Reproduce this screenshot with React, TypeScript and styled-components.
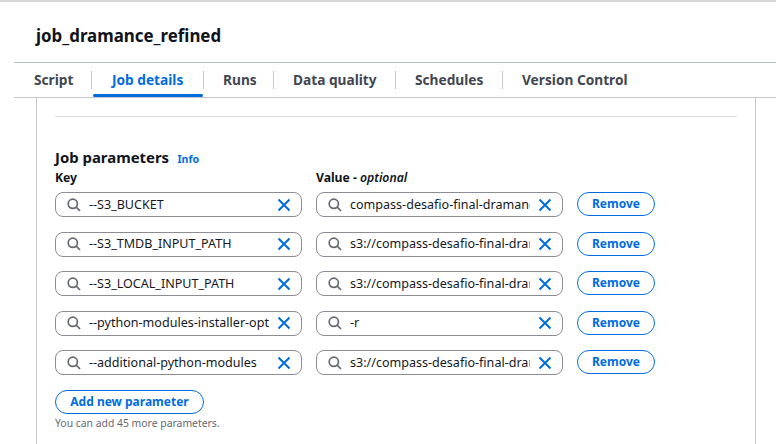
import React from 'react'
import styled, { createGlobalStyle } from 'styled-components'

const FONT = '"Noto Sans", "Open Sans", sans-serif'

const GlobalStyle = createGlobalStyle`
  html, body {
    margin: 0;
    padding: 0;
    width: 776px;
    height: 444px;
    overflow: hidden;
    background: #fff;
    font-family: ${FONT};
    color: #16191f;
  }
`

const Page = styled.div`
  display: flex;
  flex-direction: column;
  width: 776px;
  height: 444px;
  overflow: hidden;
  border-top: 2px solid #d5d7d9;
  box-sizing: border-box;
`

const Title = styled.h1`
  margin: 0;
  padding: 23px 0 0 36px;
  height: 60px;
  box-sizing: border-box;
  font-size: 16.9px;
  line-height: 22px;
  font-weight: 700;
  color: #0f141a;
`

const TabBar = styled.div`
  display: flex;
  align-items: center;
  margin-left: 14px;
  height: 34px;
  box-sizing: content-box;
  border-top: 1px solid #b4bcc4;
  border-bottom: 1px solid #c6c6cd;
`

const Tab = styled.div<{ $active?: boolean; $width: number; $first?: boolean }>`
  position: relative;
  flex: none;
  width: ${(p) => p.$width}px;
  height: 18px;
  box-sizing: border-box;
  padding-left: ${(p) => (p.$active || p.$first ? 20 : 19)}px;
  font-size: 13.7px;
  line-height: 18px;
  font-weight: 700;
  white-space: nowrap;
  color: ${(p) => (p.$active ? '#006ce0' : '#424650')};
  border-left: ${(p) => (p.$first ? 'none' : '1px solid #c6c6cd')};

  ${(p) =>
    p.$active &&
    `
    &::after {
      content: '';
      position: absolute;
      left: 1px;
      right: 0;
      bottom: -8px;
      height: 3px;
      border-radius: 2px;
      background: #006ce0;
    }
  `}
`

const Panel = styled.div`
  flex: 1;
  margin: 0 20px 0 36px;
  padding: 18px 18px 0 18px;
  border-left: 1px solid #c6c6cd;
  border-right: 1px solid #c6c6cd;
`

const Divider = styled.hr`
  margin: 0;
  border: none;
  border-top: 1px solid #dcdee0;
`

const SectionHeader = styled.div`
  display: flex;
  align-items: baseline;
  gap: 8.5px;
  margin-top: 30px;
  height: 20px;
`

const SectionTitle = styled.h2`
  margin: 0;
  font-size: 14.9px;
  line-height: 20px;
  font-weight: 700;
  color: #0f141a;
`

const InfoLink = styled.span`
  font-size: 10.5px;
  font-weight: 700;
  color: #006ce0;
`

const Labels = styled.div`
  display: grid;
  grid-template-columns: 247px 247px;
  column-gap: 14px;
  height: 20px;
  margin-top: 1px;
  font-size: 12.2px;
  line-height: 20px;
  font-weight: 700;
  color: #0f141a;

  em {
    font-weight: 600;
  }
`

const Rows = styled.div`
  display: flex;
  flex-direction: column;
  gap: 14.6px;
  margin-top: 4px;
`

const Row = styled.div`
  display: grid;
  grid-template-columns: 247px 247px 78px;
  column-gap: 14px;
  align-items: start;
`

const InputBox = styled.div`
  display: flex;
  align-items: center;
  height: 25px;
  box-sizing: border-box;
  padding: 0 10px 0 11px;
  border: 1px solid #8c8c94;
  border-radius: 8px;
  background: #fff;
`

const SearchIcon = styled.svg`
  flex: none;
  width: 14px;
  height: 14px;
  margin-right: 8px;
  fill: none;
  stroke: #656871;
  stroke-width: 1.7;
`

const InputText = styled.span`
  flex: 1;
  min-width: 0;
  overflow: hidden;
  white-space: nowrap;
  font-size: 12.55px;
  line-height: 18px;
  color: #16191f;
`

const ClearIcon = styled.svg`
  flex: none;
  width: 14px;
  height: 14px;
  margin-left: 8px;
  fill: none;
  stroke: #006ce0;
  stroke-width: 2;
`

const OutlineButton = styled.div`
  display: flex;
  align-items: center;
  justify-content: center;
  box-sizing: border-box;
  height: 24px;
  border: 1px solid #006ce0;
  border-radius: 12px;
  font-size: 12px;
  font-weight: 700;
  line-height: 16px;
  white-space: nowrap;
  color: #006ce0;
`

const AddButton = styled(OutlineButton)`
  width: 149px;
  margin-top: 15px;
`

const Hint = styled.div`
  margin-top: 2px;
  font-size: 10.4px;
  line-height: 14px;
  color: #656871;
`

const tabs = [
  { label: 'Script', width: 77, first: true },
  { label: 'Job details', width: 112, active: true },
  { label: 'Runs', width: 70 },
  { label: 'Data quality', width: 122 },
  { label: 'Schedules', width: 107 },
  { label: 'Version Control', width: 140 },
]

const params = [
  { key: '--S3_BUCKET', value: 'compass-desafio-final-dramance' },
  { key: '--S3_TMDB_INPUT_PATH', value: 's3://compass-desafio-final-dramance' },
  { key: '--S3_LOCAL_INPUT_PATH', value: 's3://compass-desafio-final-dramance' },
  { key: '--python-modules-installer-option', value: '-r' },
  { key: '--additional-python-modules', value: 's3://compass-desafio-final-dramance' },
]

const ParamInput = ({ text }: { text: string }) => (
  <InputBox>
    <SearchIcon viewBox="0 0 14 14">
      <circle cx="5.8" cy="5.8" r="4.6" />
      <path d="M9.2 9.2L13 13" />
    </SearchIcon>
    <InputText>{text}</InputText>
    <ClearIcon viewBox="0 0 14 14">
      <path d="M1.5 1.5L12.5 12.5M12.5 1.5L1.5 12.5" />
    </ClearIcon>
  </InputBox>
)

const App: React.FC = () => (
  <Page>
    <GlobalStyle />
    <Title>job_dramance_refined</Title>
    <TabBar>
      {tabs.map((t) => (
        <Tab key={t.label} $active={t.active} $first={t.first} $width={t.width}>
          {t.label}
        </Tab>
      ))}
    </TabBar>
    <Panel>
      <Divider />
      <SectionHeader>
        <SectionTitle>Job parameters</SectionTitle>
        <InfoLink>Info</InfoLink>
      </SectionHeader>
      <Labels>
        <span>Key</span>
        <span>
          Value - <em>optional</em>
        </span>
      </Labels>
      <Rows>
        {params.map((p) => (
          <Row key={p.key}>
            <ParamInput text={p.key} />
            <ParamInput text={p.value} />
            <OutlineButton>Remove</OutlineButton>
          </Row>
        ))}
      </Rows>
      <AddButton>Add new parameter</AddButton>
      <Hint>You can add 45 more parameters.</Hint>
    </Panel>
  </Page>
)

export default App
